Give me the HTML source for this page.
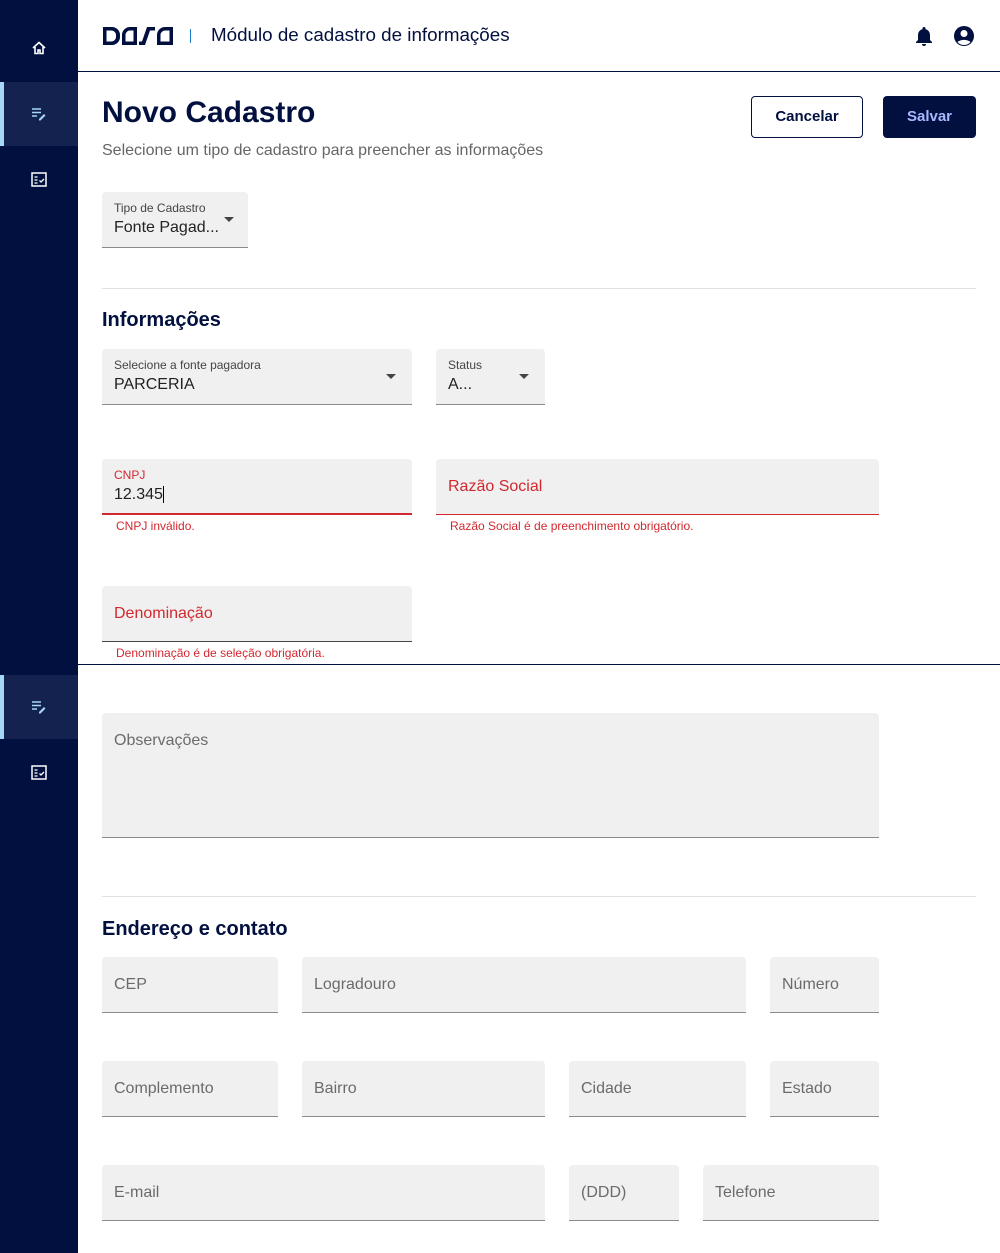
<!DOCTYPE html>
<html><head><meta charset="utf-8"><style>
*{margin:0;padding:0;box-sizing:border-box}
body{width:1000px;height:1253px;position:relative;overflow:hidden;background:#fff;font-family:"Liberation Sans",sans-serif;color:#021040}
.a{position:absolute}
.side{left:0;top:0;width:78px;height:1253px;background:#021040}
.act{left:0;width:78px;height:64px;background:#13224f;border-left:4px solid #a6d8f5}
.f{position:absolute;background:#f0f0f0;border-bottom:1px solid #8a8a8a;border-radius:4px 4px 0 0}
.ph{position:absolute;left:12px;top:50%;transform:translateY(-50%);font-size:16px;color:#6b6b6b}
.lbl{position:absolute;left:12px;top:9px;font-size:12px;color:#444}
.val{position:absolute;left:12px;top:27px;font-size:16px;color:#222}
.err{position:absolute;font-size:12px;color:#d2282f}
.car{position:absolute;width:0;height:0;border-left:5px solid transparent;border-right:5px solid transparent;border-top:5px solid #444}
h2{position:absolute;font-size:20px;font-weight:bold;color:#021040}
</style></head><body>
<div class="a side"></div>
<div class="a act" style="top:82px"></div>
<div class="a act" style="top:675px"></div>
<svg class="a" style="left:31px;top:40px" width="16" height="16" viewBox="0 0 16 16"><path d="M2 8L8 2.5 14 8M4 7v6.5h3V10h2v3.5h3V7" fill="none" stroke="#fff" stroke-width="1.6"/></svg>
<svg class="a" style="left:31px;top:107px" width="16" height="14" viewBox="0 0 16 14"><path d="M1 2h9M1 5.5h9M1 9h5" stroke="#a6d8f5" stroke-width="1.6"/><path d="M8 12l5-5 1.5 1.5-5 5H8z" fill="#a6d8f5"/></svg>
<svg class="a" style="left:31px;top:700px" width="16" height="14" viewBox="0 0 16 14"><path d="M1 2h9M1 5.5h9M1 9h5" stroke="#a6d8f5" stroke-width="1.6"/><path d="M8 12l5-5 1.5 1.5-5 5H8z" fill="#a6d8f5"/></svg>
<svg class="a" style="left:31px;top:172px" width="16" height="15" viewBox="0 0 16 15"><rect x="1" y="1" width="14" height="13" fill="none" stroke="#fff" stroke-width="1.5"/><path d="M3.5 5h3M3.5 8h3M3.5 11h3M8.5 8.5l1.5 1.5 3-3" stroke="#fff" stroke-width="1.3" fill="none"/></svg>
<svg class="a" style="left:31px;top:765px" width="16" height="15" viewBox="0 0 16 15"><rect x="1" y="1" width="14" height="13" fill="none" stroke="#fff" stroke-width="1.5"/><path d="M3.5 5h3M3.5 8h3M3.5 11h3M8.5 8.5l1.5 1.5 3-3" stroke="#fff" stroke-width="1.3" fill="none"/></svg>

<svg class="a" style="left:102px;top:26px" width="72" height="20" viewBox="0 0 72 20"><path d="M1 1h9a8 8 0 0 1 8 8v2a8 8 0 0 1-8 8H1z M4.5 4.5v11h5a4.5 4.5 0 0 0 4.5-4.5V9A4.5 4.5 0 0 0 9.5 4.5z" fill="#021040" fill-rule="evenodd"/><path d="M20 19V9a8 8 0 0 1 8-8h7v18z M23.5 15.5h8v-11H28a4.5 4.5 0 0 0-4.5 4.5z" fill="#021040" fill-rule="evenodd"/><path d="M37 19h6l5-14.5h5V1h-8l-5 14.5h-3z" fill="#021040"/><path d="M55 19V9a8 8 0 0 1 8-8h8v18z M58.5 15.5h9v-11H63a4.5 4.5 0 0 0-4.5 4.5z" fill="#021040" fill-rule="evenodd"/></svg>
<div class="a" style="left:190px;top:29px;width:1px;height:14px;background:#1a7fd0"></div>
<div class="a" style="left:211px;top:24px;font-size:18.8px;color:#021040">Módulo de cadastro de informações</div>
<svg class="a" style="left:915px;top:25px" width="18" height="22" viewBox="0 0 18 22"><path d="M9 2a1.5 1.5 0 0 1 1.5 1.5v.6A6 6 0 0 1 15 10v5l2 2v1H1v-1l2-2v-5a6 6 0 0 1 4.5-5.9v-.6A1.5 1.5 0 0 1 9 2z M7 19h4a2 2 0 0 1-4 0z" fill="#021040"/></svg>
<svg class="a" style="left:953px;top:25px" width="22" height="22" viewBox="0 0 22 22"><circle cx="11" cy="11" r="10" fill="#021040"/><circle cx="11" cy="8.5" r="3.5" fill="#fff"/><path d="M4.5 17a8 5 0 0 1 13 0a8.5 8.5 0 0 1-13 0z" fill="#fff"/></svg>
<div class="a" style="left:78px;top:71px;width:922px;height:1px;background:#021040"></div>

<div class="a" style="left:102px;top:96px;font-size:30px;font-weight:bold">Novo Cadastro</div>
<div class="a" style="left:102px;top:142px;font-size:16px;color:#666">Selecione um tipo de cadastro para preencher as informações</div>
<div class="a" style="left:751px;top:96px;width:112px;height:42px;border:1px solid #021040;border-radius:4px;text-align:center;line-height:40px;font-size:15px;font-weight:bold">Cancelar</div>
<div class="a" style="left:883px;top:96px;width:93px;height:42px;background:#021040;border-radius:4px;text-align:center;line-height:42px;font-size:15px;font-weight:bold;color:#a8b8ff">Salvar</div>

<div class="f" style="left:102px;top:192px;width:146px;height:56px"><div class="lbl">Tipo de Cadastro</div><div class="val">Fonte Pagad...</div><div class="car" style="left:122px;top:25px"></div></div>
<div class="a" style="left:102px;top:288px;width:874px;height:1px;background:#e0e0e0"></div>
<h2 style="left:102px;top:309px">Informações</h2>
<div class="f" style="left:102px;top:349px;width:310px;height:56px"><div class="lbl">Selecione a fonte pagadora</div><div class="val">PARCERIA</div><div class="car" style="left:284px;top:25px"></div></div>
<div class="f" style="left:436px;top:349px;width:109px;height:56px"><div class="lbl">Status</div><div class="val">A...</div><div class="car" style="left:83px;top:25px"></div></div>

<div class="f" style="left:102px;top:459px;width:310px;height:56px;border-bottom:2px solid #d2282f"><div class="lbl" style="color:#d2282f">CNPJ</div><div class="val">12.345<span style="border-right:1px solid #000"></span></div></div>
<div class="err" style="left:116px;top:519px">CNPJ inválido.</div>
<div class="f" style="left:436px;top:459px;width:443px;height:56px;border-bottom:1px solid #d2282f"><div class="ph" style="color:#d2282f">Razão Social</div></div>
<div class="err" style="left:450px;top:519px">Razão Social é de preenchimento obrigatório.</div>
<div class="f" style="left:102px;top:586px;width:310px;height:56px;border-bottom:1px solid #444"><div class="ph" style="color:#d2282f">Denominação</div></div>
<div class="err" style="left:116px;top:646px">Denominação é de seleção obrigatória.</div>
<div class="a" style="left:78px;top:664px;width:922px;height:1px;background:#021040"></div>

<div class="f" style="left:102px;top:713px;width:777px;height:125px"><div class="ph" style="top:19px;transform:none">Observações</div></div>
<div class="a" style="left:102px;top:896px;width:874px;height:1px;background:#e0e0e0"></div>
<h2 style="left:102px;top:918px">Endereço e contato</h2>

<div class="f" style="left:102px;top:957px;width:176px;height:56px"><div class="ph">CEP</div></div>
<div class="f" style="left:302px;top:957px;width:444px;height:56px"><div class="ph">Logradouro</div></div>
<div class="f" style="left:770px;top:957px;width:109px;height:56px"><div class="ph">Número</div></div>
<div class="f" style="left:102px;top:1061px;width:176px;height:56px"><div class="ph">Complemento</div></div>
<div class="f" style="left:302px;top:1061px;width:243px;height:56px"><div class="ph">Bairro</div></div>
<div class="f" style="left:569px;top:1061px;width:177px;height:56px"><div class="ph">Cidade</div></div>
<div class="f" style="left:770px;top:1061px;width:109px;height:56px"><div class="ph">Estado</div></div>
<div class="f" style="left:102px;top:1165px;width:443px;height:56px"><div class="ph">E-mail</div></div>
<div class="f" style="left:569px;top:1165px;width:110px;height:56px"><div class="ph">(DDD)</div></div>
<div class="f" style="left:703px;top:1165px;width:176px;height:56px"><div class="ph">Telefone</div></div>
</body></html>
